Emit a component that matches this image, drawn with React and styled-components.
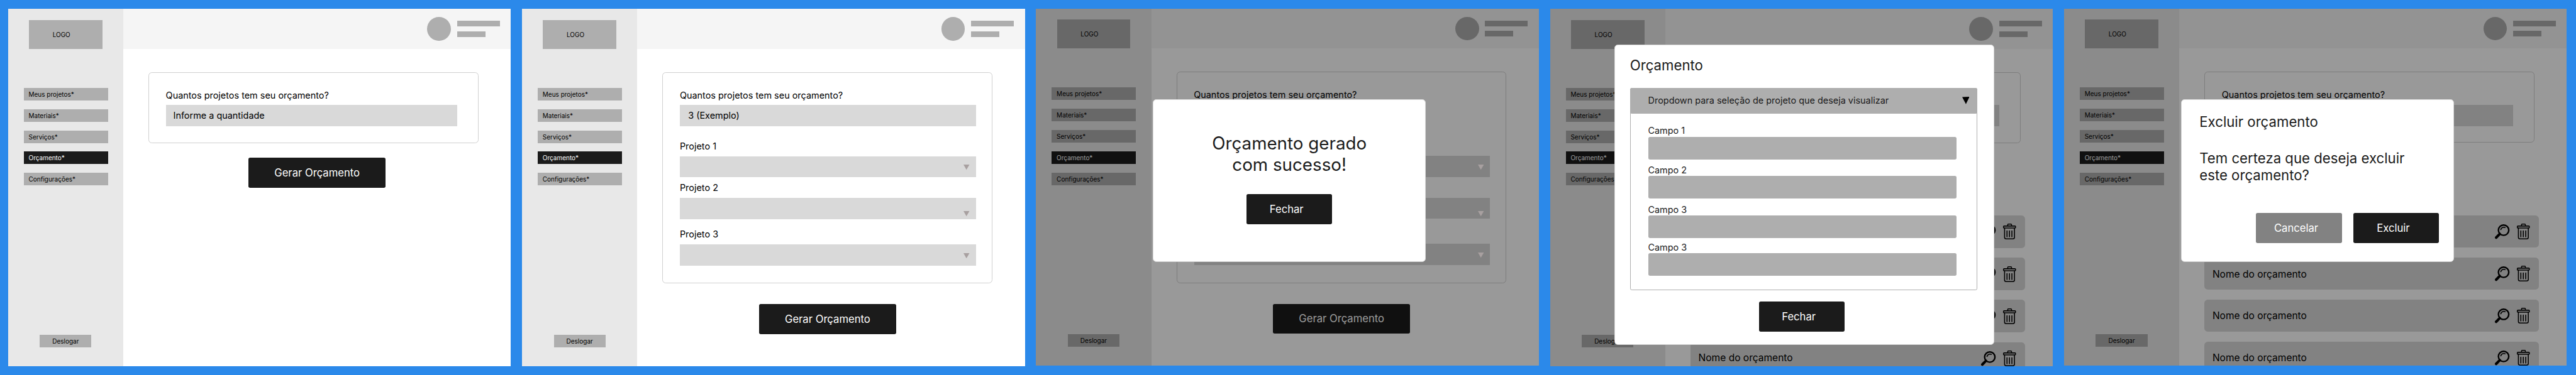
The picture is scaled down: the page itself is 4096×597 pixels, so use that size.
import React from "react";
import styled, { createGlobalStyle, css } from "styled-components";

/* 1rem equals 10 units of the 1440 x 1024 screen artboards. */
const GlobalStyle = createGlobalStyle`
  html {
    font-size: 5.5524px;
  }
  body {
    margin: 0;
    background: #2b89ea;
    font-family: Inter, "Liberation Sans", sans-serif;
    color: #000;
    overflow: hidden;
  }
  *, *::before, *::after {
    box-sizing: border-box;
  }
`;

const Board = styled.div`
  display: flex;
  align-items: flex-start;
  gap: 3.2rem;
  width: 4096px;
  height: 597px;
  padding: 2.5rem 0 0 2.3rem;
  background: #2b89ea;
  line-height: 1.21;
  white-space: nowrap;
  overflow: hidden;
`;

const Artboard = styled.section`
  position: relative;
  display: flex;
  flex: none;
  width: 144rem;
  height: 102.4rem;
  margin-top: ${(p) => (p.$lowered ? "0.1rem" : 0)};
  background: #fff;
  overflow: hidden;
`;

const Sidebar = styled.aside`
  display: flex;
  flex-direction: column;
  flex: none;
  width: 33rem;
  padding: 3.1rem 0 5.4rem;
  background: #e8e8e8;
`;

const Logo = styled.div`
  display: flex;
  align-items: center;
  justify-content: center;
  width: 21rem;
  height: 8.3rem;
  margin-left: 6rem;
  padding-right: 2.4rem;
  background: #aeaeae;
  font-size: 1.8rem;
`;

const Nav = styled.nav`
  display: flex;
  flex-direction: column;
  gap: 2.5rem;
  margin: 11.2rem 0 auto 4.5rem;
`;

const NavItem = styled.div`
  display: flex;
  align-items: center;
  width: 24.1rem;
  height: 3.6rem;
  padding-left: 1.4rem;
  background: ${(p) => (p.$active ? "#1b1b1b" : "#aeaeae")};
  color: ${(p) => (p.$active ? "#fff" : "#000")};
  font-size: 1.8rem;
`;

const Logout = styled.div`
  display: flex;
  align-items: center;
  justify-content: center;
  width: 14.8rem;
  height: 3.6rem;
  margin-left: 9.1rem;
  background: #aeaeae;
  font-size: 1.8rem;
`;

const Main = styled.main`
  display: flex;
  flex-direction: column;
  flex: 1;
  min-width: 0;
`;

const TopBar = styled.header`
  display: flex;
  align-items: center;
  justify-content: flex-end;
  gap: 1.75rem;
  flex: none;
  height: 11.4rem;
  padding-right: 3.15rem;
  background: #f5f5f5;
`;

const Avatar = styled.div`
  width: 6.8rem;
  height: 6.8rem;
  border-radius: 50%;
  background: #aeaeae;
`;

const UserLines = styled.div`
  display: flex;
  flex-direction: column;
  gap: 1.4rem;
  width: 12.25rem;
`;

const UserLine = styled.div`
  width: ${(p) => p.$width};
  height: 1.6rem;
  background: #aeaeae;
`;

const Card = styled.div`
  flex: none;
  width: 94.5rem;
  height: ${(p) => p.$height};
  margin: 6.7rem 0 0 7.2rem;
  padding: 4.8rem 0 0 4.9rem;
  border: 1px solid #d0d0d0;
  border-radius: 1rem;
`;

const Label = styled.div`
  height: 3.15rem;
  margin: ${(p) => p.$before || 0} 0 1.3rem -0.1rem;
  font-size: 2.6rem;
`;

const Input = styled.div`
  display: flex;
  align-items: center;
  width: ${(p) => p.$width || "84.7rem"};
  height: 6.1rem;
  padding-left: ${(p) => p.$indent || "2.3rem"};
  background: ${(p) => (p.$blank ? "transparent" : "#d9d9d9")};
  font-size: 2.6rem;
`;

const Select = styled(Input)`
  align-items: flex-start;
  justify-content: flex-end;
  padding: ${(p) => p.$drop || "2.5rem"} 1.8rem 0 0;
`;

const Caret = styled.svg`
  display: block;
  position: relative;
  z-index: 2;
  width: ${(p) => (p.$large ? "2.1rem" : "1.7rem")};
  height: ${(p) => (p.$large ? "2.1rem" : "1.5rem")};
  fill: ${(p) => (p.$large ? "#000" : "#a8a0a0")};
`;

const Button = styled.div`
  display: flex;
  align-items: center;
  justify-content: center;
  flex: none;
  height: 8.6rem;
  border-radius: 0.5rem;
  background: ${(p) => (p.$muted ? "#828282" : "#1b1b1b")};
  color: #fff;
  font-size: 3rem;
`;

const GenerateButton = styled(Button)`
  width: 39.2rem;
  margin: ${(p) => p.$margin};
`;

const DialogButton = styled(Button)`
  width: 24.5rem;
  padding-right: 1.6rem;
`;

const BudgetList = styled.div`
  display: flex;
  flex-direction: column;
  gap: 2.8rem;
  margin: 20.8rem 0 0 7.2rem;
`;

const BudgetRow = styled.div`
  display: flex;
  align-items: center;
  flex: none;
  gap: 2.1rem;
  width: 95.8rem;
  height: 9.3rem;
  padding: 0 2.6rem 0 2.3rem;
  border-radius: 1rem;
  background: #d9d9d9;
  font-size: 2.8rem;
`;

const BudgetName = styled.span`
  margin-right: auto;
  padding-top: ${(p) => p.$drop || "0.1rem"};
`;

const MagnifierSvg = styled.svg`
  flex: none;
  width: 4.2rem;
  height: 4.2rem;
  overflow: visible;
`;

const TrashSvg = styled.svg`
  flex: none;
  width: 3.7rem;
  height: 4.5rem;
  overflow: visible;
`;

const Scrim = styled.div`
  position: absolute;
  inset: 0;
  z-index: 1;
  background: rgba(0, 0, 0, 0.4);
`;

const dialogBase = css`
  position: absolute;
  z-index: 3;
  display: flex;
  flex-direction: column;
  border: 1px solid #d8d8d8;
  border-radius: 1rem;
  background: #fff;
  color: #1b1b1b;
`;

const Dialog = styled.div`
  ${dialogBase}
  left: 33.5rem;
  top: 25.95rem;
  width: 78.1rem;
  height: 46.6rem;
`;

const SuccessDialog = styled(Dialog)`
  align-items: center;
  padding-top: 9.6rem;
`;

const SuccessMessage = styled.p`
  margin: 0 0 5.3rem;
  font-size: 5rem;
  text-align: center;
`;

const ConfirmDialog = styled(Dialog)`
  padding: 3.9rem 4.1rem 0 5rem;
`;

const DialogText = styled.p`
  margin: ${(p) => p.$margin || 0};
  font-size: 4rem;
`;

const DialogActions = styled.div`
  display: flex;
  justify-content: flex-end;
  gap: 3.3rem;
`;

const BudgetDialog = styled.div`
  ${dialogBase}
  left: 18.5rem;
  top: 10.2rem;
  width: 108.8rem;
  height: 86.1rem;
  padding: 3.45rem 4.8rem 0 4.3rem;

  ${DialogButton} {
    margin: 3.2rem 0 0 36.8rem;
  }
`;

const DialogPanel = styled.div`
  flex: none;
  width: 99.4rem;
  height: 58rem;
  border: 1px solid #aeaeae;
  border-radius: 0.5rem;
`;

const ProjectPicker = styled.div`
  display: flex;
  align-items: center;
  justify-content: space-between;
  height: 7.3rem;
  margin: -1px -1px 3.4rem;
  padding: 0 2.3rem 0.2rem 5.1rem;
  border-radius: 0.5rem;
  background: #aeaeae;
  font-size: 2.6rem;
`;

const Field = styled.div`
  margin: 0 0 ${(p) => p.$after} 5rem;
`;

const FieldLabel = styled.div`
  height: 3.15rem;
  margin: 0 0 ${(p) => p.$gap} -0.1rem;
  font-size: 2.6rem;
`;

const FieldBox = styled.div`
  width: 88.3rem;
  height: 6.5rem;
  border-radius: 0.5rem;
  background: #aeaeae;
`;

const SmallCaret = () => (
  <Caret viewBox="0 0 17 15" preserveAspectRatio="none">
    <polygon points="0,0 17,0 8.5,15" />
  </Caret>
);

const Magnifier = () => (
  <MagnifierSvg viewBox="0 0 126 126" fill="none" stroke="#000" strokeLinecap="round">
    <circle cx="75" cy="51" r="44.5" strokeWidth="13" />
    <path d="M42 83 L11 115" strokeWidth="22" />
    <path d="M51 46 A27 27 0 0 1 88 28" strokeWidth="9" />
  </MagnifierSvg>
);

const Trash = () => (
  <TrashSvg viewBox="0 0 111 135" fill="none" stroke="#000" strokeWidth="8.5" strokeLinecap="round">
    <path d="M40 18 V9 Q40 4 45 4 H67 Q73 4 73 9 V18" />
    <rect x="4" y="21" width="103" height="17" rx="5" />
    <path d="M13 40 V118 Q13 131 26 131 H85 Q98 131 98 118 V40" />
    <path d="M34 63 V113 M55 63 V113 M76 63 V113" />
  </TrashSvg>
);

const NAV_ITEMS = ["Meus projetos*", "Materiais*", "Serviços*", "Orçamento*", "Configurações*"];

function Screen({ lowered, overlay, children }) {
  return (
    <Artboard $lowered={lowered}>
      <Sidebar>
        <Logo>LOGO</Logo>
        <Nav>
          {NAV_ITEMS.map((item) => (
            <NavItem key={item} $active={item === "Orçamento*"}>
              {item}
            </NavItem>
          ))}
        </Nav>
        <Logout>Deslogar</Logout>
      </Sidebar>
      <Main>
        <TopBar>
          <Avatar />
          <UserLines>
            <UserLine $width="12.25rem" />
            <UserLine $width="8.1rem" />
          </UserLines>
        </TopBar>
        {children}
      </Main>
      {overlay && <Scrim />}
      {overlay}
    </Artboard>
  );
}

function QuantityCard({ question, value }) {
  return (
    <Card $height="20.3rem">
      <Label>{question}</Label>
      <Input $width="83.3rem" $indent="2.05rem">
        {value}
      </Input>
    </Card>
  );
}

const PROJECTS = [
  { name: "Projeto 1", before: "4.1rem", drop: "2.5rem" },
  { name: "Projeto 2", before: "1.45rem", drop: "3.8rem" },
  { name: "Projeto 3", before: "2.7rem", drop: "2.5rem" },
];

function ProjectsCard({ quantity, named }) {
  return (
    <Card $height="60.6rem">
      <Label>Quantos projetos tem seu orçamento?</Label>
      <Input $blank={!quantity}>{quantity}</Input>
      {PROJECTS.map((p) => (
        <React.Fragment key={p.name}>
          <Label $before={p.before}>{named && p.name}</Label>
          <Select $drop={p.drop}>
            <SmallCaret />
          </Select>
        </React.Fragment>
      ))}
    </Card>
  );
}

function Budgets({ items }) {
  return (
    <BudgetList>
      {items.map((item, i) => (
        <BudgetRow key={i}>
          <BudgetName $drop={item.drop}>{item.name}</BudgetName>
          <Magnifier />
          <Trash />
        </BudgetRow>
      ))}
    </BudgetList>
  );
}

const QUESTION = "Quantos projetos tem seu orçamento?";
const NAME = "Nome do orçamento";

const FIELDS = [
  { label: "Campo 1", gap: "0.25rem", after: "1.3rem" },
  { label: "Campo 2", gap: "0.25rem", after: "1.5rem" },
  { label: "Campo 3", gap: "0.05rem", after: "1.1rem" },
  { label: "Campo 3", gap: "0.15rem", after: "0" },
];

export default function App() {
  return (
    <>
      <GlobalStyle />
      <Board>
        <Screen lowered>
          <QuantityCard question={QUESTION} value="Informe a quantidade" />
          <GenerateButton $margin="4.3rem 0 0 35.9rem">Gerar Orçamento</GenerateButton>
        </Screen>

        <Screen lowered>
          <ProjectsCard quantity="3 (Exemplo)" named />
          <GenerateButton $margin="5.9rem 0 0 34.9rem">Gerar Orçamento</GenerateButton>
        </Screen>

        <Screen
          overlay={
            <SuccessDialog>
              <SuccessMessage>
                Orçamento gerado
                <br />
                com sucesso!
              </SuccessMessage>
              <DialogButton>Fechar</DialogButton>
            </SuccessDialog>
          }
        >
          <ProjectsCard />
          <GenerateButton $margin="5.9rem 0 0 34.9rem">Gerar Orçamento</GenerateButton>
        </Screen>

        <Screen
          lowered
          overlay={
            <BudgetDialog>
              <DialogText $margin="0 0 3.95rem -0.1rem">Orçamento</DialogText>
              <DialogPanel>
                <ProjectPicker>
                  Dropdown para seleção de projeto que deseja visualizar
                  <Caret $large viewBox="0 0 21 21">
                    <polygon points="0,0.8 21,0 10.7,21" />
                  </Caret>
                </ProjectPicker>
                {FIELDS.map((f, i) => (
                  <Field key={i} $after={f.after}>
                    <FieldLabel $gap={f.gap}>{f.label}</FieldLabel>
                    <FieldBox />
                  </Field>
                ))}
              </DialogPanel>
              <DialogButton>Fechar</DialogButton>
            </BudgetDialog>
          }
        >
          <QuantityCard />
          <Budgets items={[{}, {}, {}, { name: NAME }]} />
        </Screen>

        <Screen
          overlay={
            <ConfirmDialog>
              <DialogText $margin="0 0 5.7rem 0.1rem">Excluir orçamento</DialogText>
              <DialogText $margin="0 0 8.3rem 0.1rem">
                Tem certeza que deseja excluir
                <br />
                este orçamento?
              </DialogText>
              <DialogActions>
                <DialogButton $muted>Cancelar</DialogButton>
                <DialogButton>Excluir</DialogButton>
              </DialogActions>
            </ConfirmDialog>
          }
        >
          <QuantityCard question={QUESTION} />
          <Budgets
            items={[
              {},
              { name: NAME, drop: "0.5rem" },
              { name: NAME, drop: "0.2rem" },
              { name: NAME },
            ]}
          />
        </Screen>
      </Board>
    </>
  );
}
